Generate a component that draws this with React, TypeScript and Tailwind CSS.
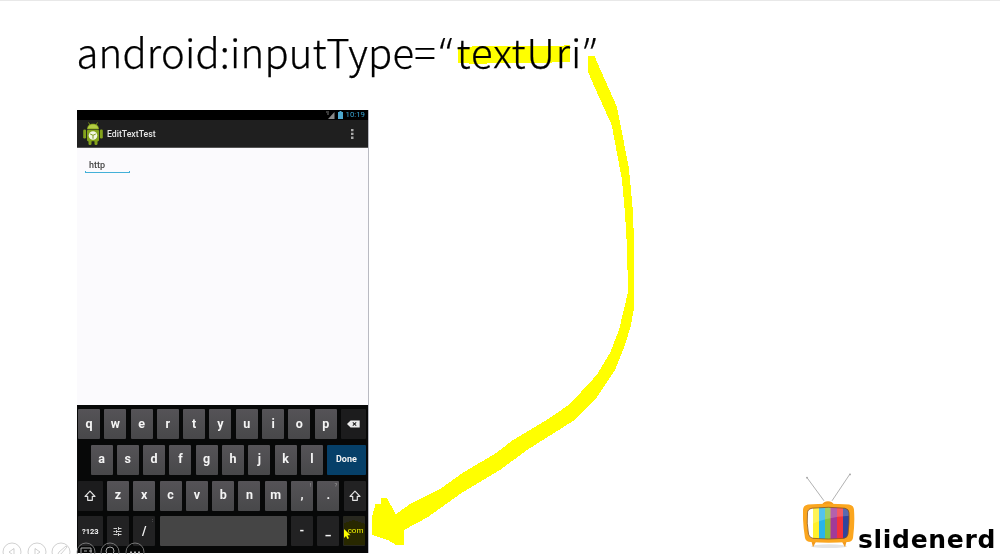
import React from "react";

type KeyProps = { label: React.ReactNode; className?: string; hint?: string };

function Key({ label, className = "w-[22px] bg-linear-to-b from-[#555357] to-[#48484a]", hint }: KeyProps) {
  return (
    <div className={`relative flex h-[30px] shrink-0 items-center justify-center rounded-[1px] font-['Roboto'] font-bold text-[#f4f4f4] ${className}`}>
      {label}
      {hint && <span className="absolute top-[1px] right-[2px] text-[6px] leading-none font-normal text-[#9a9a9a]">{hint}</span>}
    </div>
  );
}

function Shift() {
  return (
    <svg width="12" height="12" viewBox="0 0 12 12" fill="none" stroke="#e4e4e4" strokeWidth="1.2" strokeLinejoin="round">
      <path d="M6 1.2 11 6.3H8.3V10.3H3.7V6.3H1Z" />
    </svg>
  );
}

function Backspace() {
  return (
    <svg width="13" height="8" viewBox="0 0 13 8">
      <path d="M0 4 3.6 .5H12.7V7.5H3.6Z" fill="#ececec" />
      <path d="m5.8 2.3 3.4 3.4M9.2 2.3 5.8 5.7" stroke="#222" strokeWidth="1.1" />
    </svg>
  );
}

function Sliders() {
  return (
    <svg width="9" height="9" viewBox="0 0 9 9" stroke="#ccc" strokeWidth="1" fill="none">
      <path d="M.5 1.500h3.500M5.500 1.500h3M.5 4.500h2M3.500 4.500h5M.5 7.500h4M6 7.500h2.500M5.500 0v3M3.500 3v3M5.500 6v3" />
    </svg>
  );
}

function Robot() {
  return (
    <svg width="20" height="24" viewBox="0 0 20 24">
      <g fill="#84a31c">
        <path d="M4 7.200C4.200 0 15.800 0 16 7.200Z" />
        <path d="m5.500 .5 1.500 2.500M14.500 .5 13 3" stroke="#8fae1b" strokeWidth=".8" />
        <rect x="4" y="7.800" width="12" height="11.500" rx="1.200" />
        <rect x=".2" y="7.500" width="2.900" height="9" rx="1.200" />
        <rect x="16.900" y="7.500" width="2.900" height="9" rx="1.200" />
        <rect x="5.500" y="18" width="3" height="5" rx="1.200" />
        <rect x="11.500" y="18" width="3" height="5" rx="1.200" />
      </g>
      <path d="M4.700 6.500C5.500 1 14.500 1 15.300 6.500Z" fill="#b4cd45" />
      <circle cx="10" cy="13.500" r="4.300" fill="#f2f5e4" />
      <path d="m7.200 12 2.800 1.300 2.800-1.300M10 13.300v3.400" stroke="#7d9a20" strokeWidth="1" fill="none" />
    </svg>
  );
}

function Television() {
  return (
    <svg width="52" height="76" viewBox="0 0 52 82" preserveAspectRatio="none" className="shrink-0">
      <ellipse cx="26" cy="79" rx="18" ry="2" fill="#e4e4e4" />
      <path d="M4 5 21 30M47 1 29 30" stroke="#8b8b8b" strokeWidth=".7" />
      <circle cx="4" cy="5" r="1" fill="#aaa" />
      <circle cx="47" cy="1.500" r="1" fill="#aaa" />
      <path d="M19 35c1-6 11-6 12 0ZM8 72l2 8 4-8ZM38 72l4 8 2-8Z" fill="#f39a1d" />
      <path d="M5 34Q25 32.500 46 34Q51 35 51 40Q52 54 50 70Q49 74 45 74.500Q25 76 8 74.500Q3 74 2 70Q-.5 54 0 40Q0 35 5 34Z" fill="#fba61f" />
      <clipPath id="screen">
        <path d="M9 38Q25 36 42 38Q46 39 46 43Q46.500 54 45 66Q44 70 41 70.500Q25 72 10 70.500Q6.500 70 5.500 66Q3.500 54 4.500 43Q4.500 39 9 38Z" />
      </clipPath>
      <g clipPath="url(#screen)">
        <rect x="3" y="33" width="7" height="40" fill="#fff" />
        <rect x="10" y="33" width="6" height="40" fill="#fff02c" />
        <rect x="16" y="33" width="6" height="40" fill="#28b4ea" />
        <rect x="22" y="33" width="5.500" height="40" fill="#84c441" />
        <rect x="27.500" y="33" width="6.500" height="40" fill="#a23a98" />
        <rect x="34" y="33" width="6" height="40" fill="#f3333b" />
        <rect x="40" y="33" width="8" height="40" fill="#31459c" />
        <path d="M3 33H48V46Q22 47 3 58Z" fill="#fff" opacity=".2" />
      </g>
      <path d="M9 38Q25 36 42 38Q46 39 46 43Q46.500 54 45 66Q44 70 41 70.500Q25 72 10 70.500Q6.500 70 5.500 66Q3.500 54 4.500 43Q4.500 39 9 38Z" fill="none" stroke="#8a5216" strokeWidth=".8" />
    </svg>
  );
}

const dark = "w-[22px] bg-[#222223] text-[12px]";

export default function App() {
  return (
    <main className="relative flex h-[554px] w-[1000px] flex-col overflow-hidden border-t border-[#e8e8e8] bg-white">
      <h1 className="ml-[76.500px] flex h-[109px] pt-[20px] font-['Noto_Sans_CJK_SC',sans-serif] text-[40px] leading-[60px] font-light whitespace-nowrap text-black [-webkit-text-stroke:0.25px_black]">
        <span className="w-[362px] tracking-[0.200px]">android:inputType=</span>
        <span className="w-[18px] pt-[1px] pl-[1px] font-['Open_Sans',sans-serif] text-[43px]">“</span>
        <span className="w-[127px] tracking-[0.900px]">textUri</span>
        <span className="pt-[1px] font-['Open_Sans',sans-serif] text-[43px]">”</span>
      </h1>
      <section className="ml-[77px] flex h-[443px] w-[292px] flex-col border-r border-[#b9bac2] bg-[#fbfafd]">
        <div className="flex h-[10px] shrink-0 items-center justify-end gap-[3px] bg-black pr-[3px] font-['Roboto'] text-[7.800px] leading-none text-[#38a5d4]">
          <svg width="9" height="8" viewBox="0 0 9 8"><path d="M8.500 1V8H2Z" fill="#888" /><path d="M0 1h3M1 3h2" stroke="#777" /></svg>
          <svg width="5" height="8" viewBox="0 0 5 8"><path d="M1.500 0h2v1H5v7H0V1h1.500Z" fill="#4da9cf" /></svg>
          <span>10:19</span>
        </div>
        <div className="flex h-[28px] shrink-0 items-center border-b border-[#555] bg-[#1f1f1f] pr-[14px] pl-[6px]">
          <Robot />
          <span className="ml-[4px] flex-1 pt-[2px] font-['Roboto'] text-[8.700px] font-medium text-[#e6e6e6]">EditTextTest</span>
          <svg width="4" height="10" viewBox="0 0 4 10" fill="#aaa"><path d="M1 0h2.500v2.300H1ZM1 3.800h2.500v2.300H1ZM1 7.600h2.500v2.300H1Z" /></svg>
        </div>
        <div className="h-[257px] shrink-0 pt-[11px] pl-[8px]">
          <div className="h-[14px] w-[45px] border-x border-b border-[#43b0d8] pl-[3px] font-['Roboto'] text-[9px] leading-[12px] font-medium text-[#444] [border-image:linear-gradient(to_bottom,transparent_85%,#43b0d8_85%)_1]">http</div>
        </div>
        <div className="flex h-[148px] shrink-0 flex-col gap-[5.800px] bg-[#070808] pt-[4px] pl-[1px] text-[12.500px]">
          <div className="flex gap-[4.300px]">
            {[..."qwertyuiop"].map((c) => <Key key={c} label={c} />)}
            <Key label={<Backspace />} className="w-[25px] bg-[#1c1c1d]" />
          </div>
          <div className="flex gap-[4.300px] pl-[12.500px]">
            {[..."asdfghjkl"].map((c) => <Key key={c} label={c} />)}
            <Key label="Done" className="w-[38.500px] bg-[#064069] text-[9px]" />
          </div>
          <div className="flex gap-[4.300px]">
            <Key label={<Shift />} className="w-[24.700px] bg-[#1c1c1d]" />
            {[..."zxcvbnm"].map((c) => <Key key={c} label={c} />)}
            <Key label="," hint="!" />
            <Key label="." hint="?" />
            <Key label={<Shift />} className={dark} />
          </div>
          <div className="flex gap-[4.300px]">
            <Key label="?123" className="w-[24.700px] bg-[#222223] text-[7.500px]" />
            <Key label={<Sliders />} className={dark} />
            <Key label="/" hint=":" className={dark} />
            <Key label="" className="w-[127px] bg-[#454545]" />
            <Key label="-" className={dark} />
            <Key label="_" className={dark} />
            <Key label=".com" className="w-[22px] bg-[#28281f] text-[8px] font-normal" />
          </div>
        </div>
      </section>

      <div className="absolute top-[472px] left-[803px] flex gap-[3px]">
        <Television />
        <span className="mt-[52px] font-['DejaVu_Sans'] text-[25px] leading-[29px] font-bold tracking-[0.700px] text-black">slidenerd</span>
      </div>

      <svg className="absolute -top-px left-0" width="1000" height="554" viewBox="0 0 1000 554" fill="none">
        <path d="M344 529v9l2-2 1.500 3 1.500-.7-1.500-3h3Z" fill="#fff" />
        <g stroke="#8c8c8c" strokeWidth="1">
          {[12, 37, 61].map((x) => <circle key={x} cx={x} cy="552" r="9" strokeOpacity=".4" />)}
          {[86, 110, 135].map((x) => <circle key={x} cx={x} cy="552" r="9" strokeOpacity=".8" />)}
          <path d="M14 548.500l-5 3.500 5 3.500ZM35 548.500l5 3.500-5 3.500ZM57 556l2-4 7-6 1 1-6 7Z" strokeOpacity=".4" />
        </g>
        <g stroke="#aaa">
          <path d="M81 548h10v6M81 548v6M84 551h3M89 551h3" />
          <circle cx="110" cy="551" r="4" />
          <path d="M130 552.500h2m2 0h2m2 0h2" strokeWidth="2" />
        </g>
      </svg>
      <svg className="absolute -top-px left-0 mix-blend-multiply" width="1000" height="554" viewBox="0 0 1000 554" fill="#ff0" shapeRendering="crispEdges">
        <path d="M458 47 464 48 475 46H557L570 45V62H556L548 63H493L480 64 458 63ZM344 523 354 520 365 524V545H344Z" />
        <path d="M588 56H594.700L597 62 617 107 628.700 167 631 190 633 213 634 243V308L631 325 625 345 615 370 595 400 573 421 527 450 500 470 463 492 428 517 404 530V545H396L388 540 372 535V517L375.700 503.500H381V498H387L395.700 514.300 410 504 440 489 463 472.700 496.700 452.700 513 440 546.700 420 570 404 596.700 375 610 353 619 330 628 292 627 247 625 213 622 180 611.700 125 595 88 588 72Z" />
      </svg>
    </main>
  );
}
